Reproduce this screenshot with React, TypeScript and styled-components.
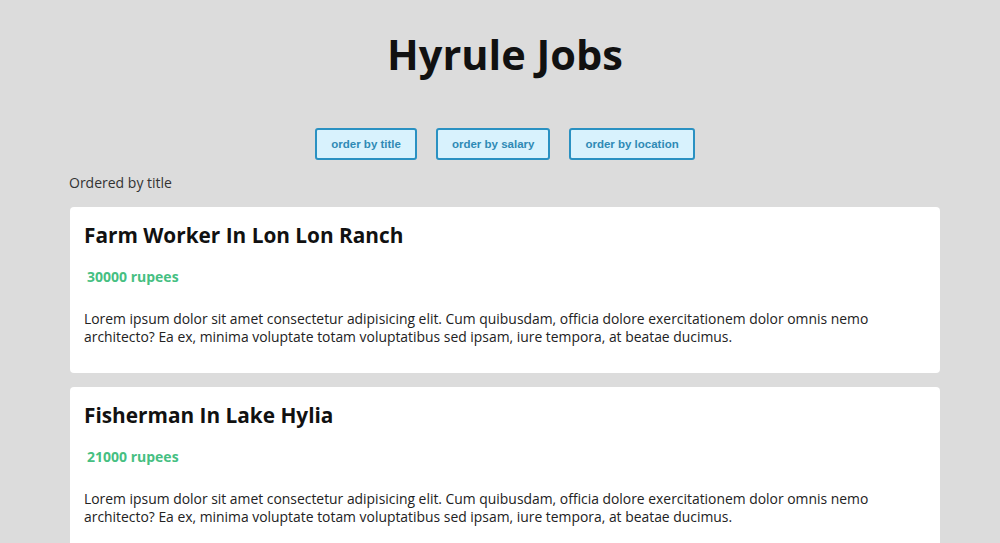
import React from "react";
import styled, { createGlobalStyle } from "styled-components";

const Global = createGlobalStyle`
  html, body { margin: 0; padding: 0; background: #dcdcdc; }
  body { font-family: "Open Sans", "Noto Sans", sans-serif; color: #222; }
`;

const Page = styled.div`
  width: 990px;
  height: 543px;
  padding-left: 10px;
  overflow: hidden;
`;

const Header = styled.header`
  text-align: center;
  padding-top: 26px;
`;

const Title = styled.h1`
  margin: 0;
  font-size: 41.5px;
  line-height: 56px;
  font-weight: 700;
  color: #111;
`;

const Order = styled.div`
  display: flex;
  justify-content: center;
  gap: 19px;
  margin-top: 46px;
`;

const OrderButton = styled.button`
  height: 32px;
  padding: 0 14px;
  border: 2px solid #2a91c2;
  border-radius: 3px;
  background: #d8f2fd;
  color: #2f8ab5;
  font-family: "Liberation Sans", Arial, sans-serif;
  font-weight: 700;
  font-size: 11.5px;
  cursor: pointer;
`;

const JobList = styled.main`
  width: 870px;
  margin: 0 auto;
`;

const OrderedBy = styled.p`
  margin: 14px 0 15px -1px;
  font-size: 14px;
  line-height: 18px;
  color: #333;
`;

const Cards = styled.ul`
  list-style: none;
  margin: 0;
  padding: 0;
  display: flex;
  flex-direction: column;
  gap: 14px;
`;

const Card = styled.li`
  background: #fff;
  border-radius: 4px;
  padding: 14px 14px 27px;
`;

const JobTitle = styled.h2`
  margin: 0;
  font-size: 20.8px;
  line-height: 28px;
  font-weight: 700;
  color: #111;
`;

const Salary = styled.p`
  margin: 19px 0 0 3px;
  font-size: 14px;
  line-height: 18px;
  font-weight: 700;
  color: #46bf82;
`;

const Description = styled.p`
  margin: 24px 0 0;
  font-size: 13.9px;
  line-height: 18px;
  color: #222;
`;

const lorem =
  "Lorem ipsum dolor sit amet consectetur adipisicing elit. Cum quibusdam, officia dolore exercitationem dolor omnis nemo architecto? Ea ex, minima voluptate totam voluptatibus sed ipsam, iure tempora, at beatae ducimus.";

const jobs = [
  { title: "Farm Worker In Lon Lon Ranch", salary: 30000 },
  { title: "Fisherman In Lake Hylia", salary: 21000 },
];

export default function App() {
  return (
    <Page>
      <Global />
      <Header>
        <Title>Hyrule Jobs</Title>
        <Order>
          <OrderButton>order by title</OrderButton>
          <OrderButton>order by salary</OrderButton>
          <OrderButton>order by location</OrderButton>
        </Order>
      </Header>
      <JobList>
        <OrderedBy>Ordered by title</OrderedBy>
        <Cards>
          {jobs.map((j) => (
            <Card key={j.title}>
              <JobTitle>{j.title}</JobTitle>
              <Salary>{j.salary} rupees</Salary>
              <Description>{lorem}</Description>
            </Card>
          ))}
        </Cards>
      </JobList>
    </Page>
  );
}
